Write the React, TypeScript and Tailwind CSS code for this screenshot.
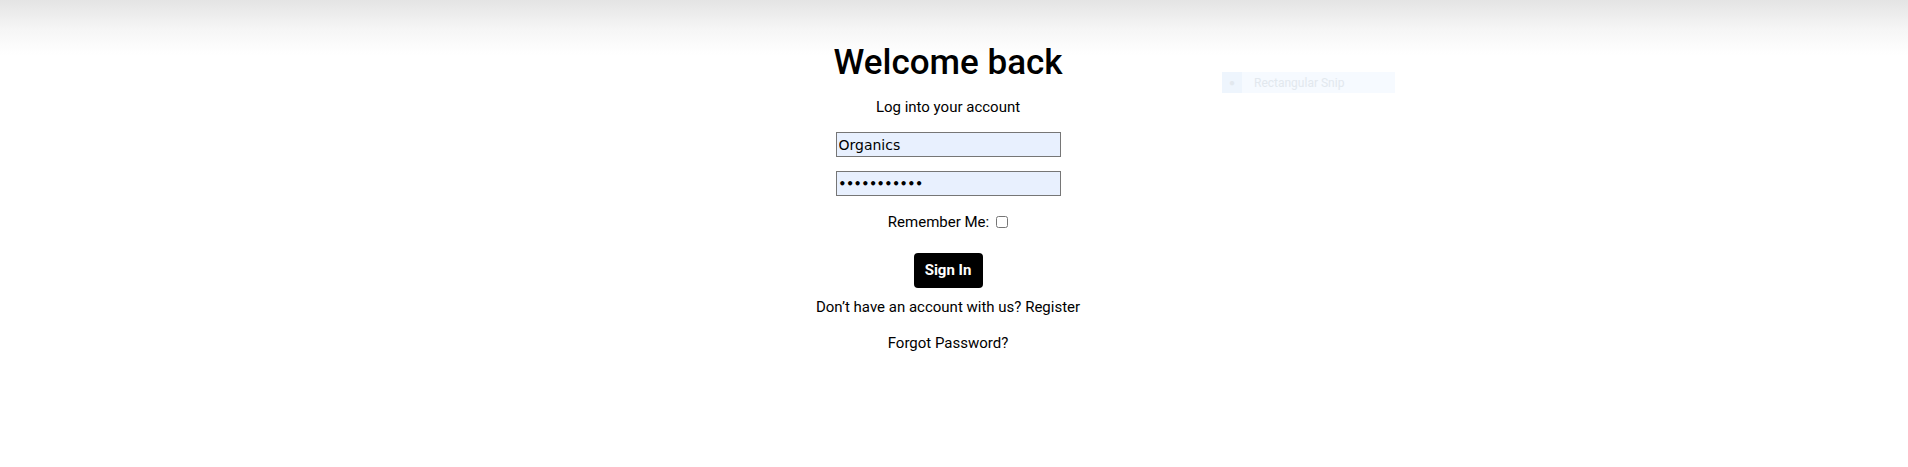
import React from "react";

export default function App() {
  return (
    <div
      className="relative w-full h-[467px] bg-white bg-[linear-gradient(to_bottom,#e4e4e4_0px,#f6f6f6_30px,#ffffff_55px)] text-black"
      style={{ fontFamily: "Roboto, 'Noto Sans', sans-serif" }}
    >
      <div className="flex flex-col items-center pt-[41px] pr-[12px]">
        <h1 className="text-[35px] leading-[44px] font-medium">Welcome back</h1>
        <p className="mt-[12px] text-[15px] leading-[20px]">Log into your account</p>
        <input
          type="text"
          defaultValue="Organics"
          className="mt-[15px] w-[225px] h-[25px] bg-[#e8f0fe] border border-[#767676] px-[2px] text-[14px] leading-[20px] outline-none"
          style={{ fontFamily: "'DejaVu Sans', Verdana, sans-serif" }}
        />
        <input
          type="password"
          defaultValue="ahdjfkeiwor"
          className="mt-[14px] w-[225px] h-[25px] bg-[#e8f0fe] border border-[#767676] px-[2px] text-[12px] font-bold leading-[20px] outline-none"
          style={{ fontFamily: "'DejaVu Sans', Verdana, sans-serif" }}
        />
        <label className="mt-[16px] flex items-center gap-[7px] text-[15px] leading-[20px]">
          <span>Remember Me:</span>
          <input type="checkbox" className="w-[12px] h-[12px]" />
        </label>
        <button className="mt-[21px] w-[69px] h-[35px] bg-black text-white rounded-[4px] text-[15px] font-bold">
          Sign In
        </button>
        <p className="mt-[9px] text-[15px] leading-[20px]">Don’t have an account with us? Register</p>
        <p className="mt-[16px] text-[15px] leading-[20px]">Forgot Password?</p>
      </div>
      <div className="absolute left-[1222px] top-[72px] w-[173px] h-[21px] bg-[#f6faff] flex items-center text-[12px] text-[#e2e8ee]">
        <span className="w-[20px] h-full bg-[#eef5fd] flex items-center justify-center text-[10px]">●</span>
        <span className="ml-[12px]">Rectangular Snip</span>
      </div>
    </div>
  );
}
